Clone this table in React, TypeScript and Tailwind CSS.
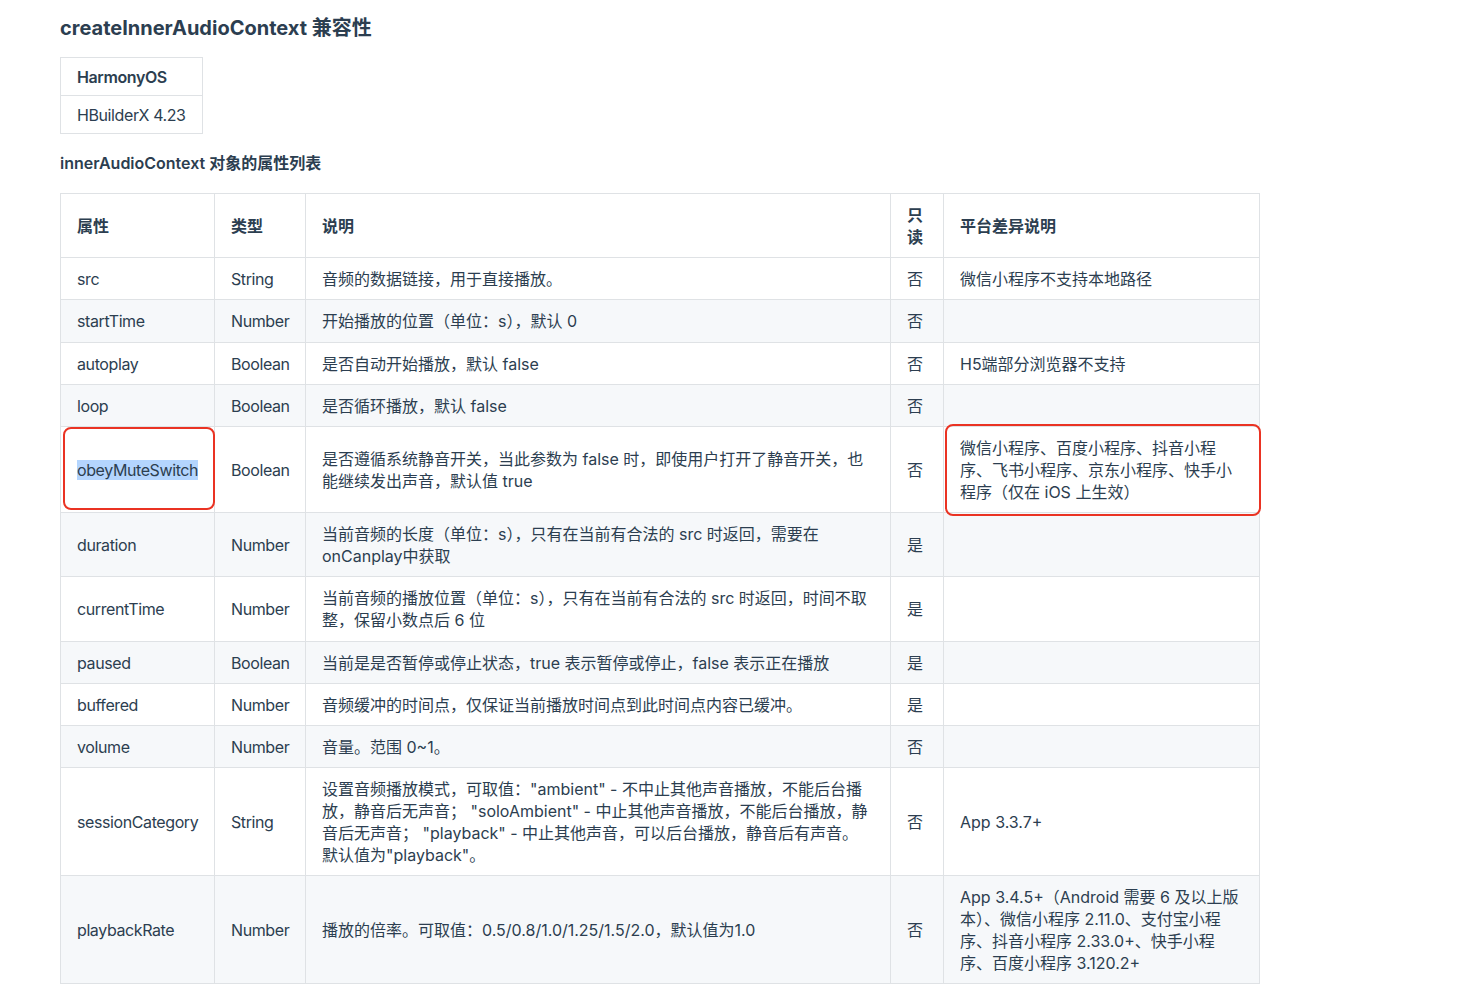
const font = { fontFamily: 'Inter, "Noto Sans CJK SC", sans-serif' };

type Row = { name: string; type: string; desc: string; ro: string; note: string };

const ROWS: Row[] = [
  { name: "src", type: "String", desc: "音频的数据链接，用于直接播放。", ro: "否", note: "微信小程序不支持本地路径" },
  { name: "startTime", type: "Number", desc: "开始播放的位置（单位：s），默认 0", ro: "否", note: "" },
  { name: "autoplay", type: "Boolean", desc: "是否自动开始播放，默认 false", ro: "否", note: "H5端部分浏览器不支持" },
  { name: "loop", type: "Boolean", desc: "是否循环播放，默认 false", ro: "否", note: "" },
  {
    name: "obeyMuteSwitch",
    type: "Boolean",
    desc: "是否遵循系统静音开关，当此参数为 false 时，即使用户打开了静音开关，也能继续发出声音，默认值 true",
    ro: "否",
    note: "微信小程序、百度小程序、抖音小程序、飞书小程序、京东小程序、快手小程序（仅在 iOS 上生效）",
  },
  { name: "duration", type: "Number", desc: "当前音频的长度（单位：s），只有在当前有合法的 src 时返回，需要在 onCanplay中获取", ro: "是", note: "" },
  { name: "currentTime", type: "Number", desc: "当前音频的播放位置（单位：s），只有在当前有合法的 src 时返回，时间不取整，保留小数点后 6 位", ro: "是", note: "" },
  { name: "paused", type: "Boolean", desc: "当前是是否暂停或停止状态，true 表示暂停或停止，false 表示正在播放", ro: "是", note: "" },
  { name: "buffered", type: "Number", desc: "音频缓冲的时间点，仅保证当前播放时间点到此时间点内容已缓冲。", ro: "是", note: "" },
  { name: "volume", type: "Number", desc: "音量。范围 0~1。", ro: "否", note: "" },
  {
    name: "sessionCategory",
    type: "String",
    desc: "设置音频播放模式，可取值：\"ambient\" - 不中止其他声音播放，不能后台播放，静音后无声音； \"soloAmbient\" - 中止其他声音播放，不能后台播放，静音后无声音； \"playback\" - 中止其他声音，可以后台播放，静音后有声音。默认值为\"playback\"。",
    ro: "否",
    note: "App 3.3.7+",
  },
  {
    name: "playbackRate",
    type: "Number",
    desc: "播放的倍率。可取值：0.5/0.8/1.0/1.25/1.5/2.0，默认值为1.0",
    ro: "否",
    note: "App 3.4.5+（Android 需要 6 及以上版本）、微信小程序 2.11.0、支付宝小程序、抖音小程序 2.33.0+、快手小程序、百度小程序 3.120.2+",
  },
];

const cell = "border border-[#dfe2e5] px-4 pt-[10px] pb-[9.2px] align-middle";
const latin = "tracking-[-0.025em]";

export default function App() {
  return (
    <div className="min-h-screen bg-white pl-[60px] pt-[14px] text-[16px] leading-[22px] text-[#2c3e50]" style={font}>
      <h1 className="text-[20px] font-bold leading-[28px]">createInnerAudioContext 兼容性</h1>

      <table className="mt-[15px] border-collapse">
        <thead>
          <tr>
            <th className={`border border-[#dfe2e5] px-4 pt-2 pb-[7px] text-left font-semibold ${latin}`}>HarmonyOS</th>
          </tr>
        </thead>
        <tbody>
          <tr>
            <td className={`border border-[#dfe2e5] px-4 pt-2 pb-[7px] ${latin}`}>HBuilderX 4.23</td>
          </tr>
        </tbody>
      </table>

      <p className="mt-[18px] font-semibold">innerAudioContext 对象的属性列表</p>

      <div className="relative mt-[19px] w-[1199px]">
        <table className="w-[1199px] table-fixed border-collapse">
          <colgroup>
            <col className="w-[154px]" />
            <col className="w-[91px]" />
            <col className="w-[585px]" />
            <col className="w-[53px]" />
            <col className="w-[316px]" />
          </colgroup>
          <thead>
            <tr>
              {["属性", "类型", "说明", "只读", "平台差异说明"].map((h) => (
                <th key={h} className={`${cell} text-left font-semibold`}>
                  {h}
                </th>
              ))}
            </tr>
          </thead>
          <tbody>
            {ROWS.map((r, i) => (
              <tr key={r.name} className={i % 2 === 1 ? "bg-[#f6f8fa]" : "bg-white"}>
                <td className={`${cell} ${latin}`}>
                  {r.name === "obeyMuteSwitch" ? <span className="bg-[#b4d5fe]">{r.name}</span> : r.name}
                </td>
                <td className={`${cell} ${latin}`}>{r.type}</td>
                <td className={cell}>{r.desc}</td>
                <td className={cell}>{r.ro}</td>
                <td className={cell}>{r.note}</td>
              </tr>
            ))}
          </tbody>
        </table>

        {/* annotation boxes */}
        <div className="pointer-events-none absolute left-[3px] top-[234px] h-[83px] w-[152px] rounded-[8px] border-[2.5px] border-[#ea3323]" />
        <div className="pointer-events-none absolute left-[885px] top-[231px] h-[92px] w-[316px] rounded-[8px] border-[2.5px] border-[#ea3323]" />
      </div>
    </div>
  );
}
